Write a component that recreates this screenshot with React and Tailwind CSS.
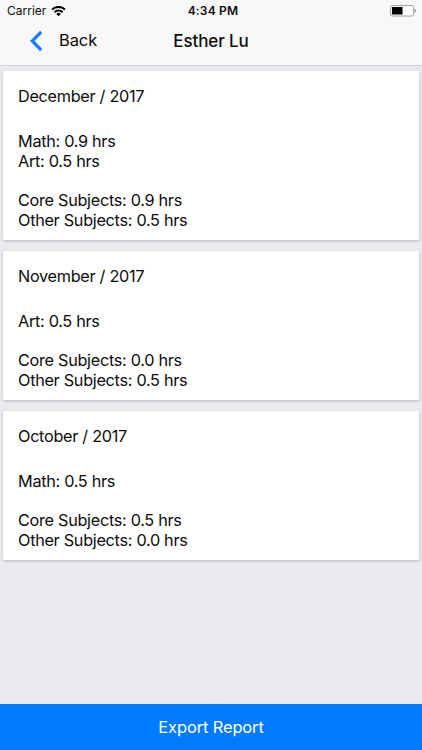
const months = [
  {
    title: "December / 2017",
    subjects: ["Math: 0.9 hrs", "Art: 0.5 hrs"],
    totals: ["Core Subjects: 0.9 hrs", "Other Subjects: 0.5 hrs"],
  },
  {
    title: "November / 2017",
    subjects: ["Art: 0.5 hrs"],
    totals: ["Core Subjects: 0.0 hrs", "Other Subjects: 0.5 hrs"],
  },
  {
    title: "October / 2017",
    subjects: ["Math: 0.5 hrs"],
    totals: ["Core Subjects: 0.5 hrs", "Other Subjects: 0.0 hrs"],
  },
];

function WifiIcon() {
  return (
    <svg width="15" height="11" viewBox="0 0 15 11" fill="none" stroke="#000" strokeWidth="2">
      <path d="M1 3.6a9.2 9.2 0 0 1 13 0" />
      <path d="M3.4 6.2a5.8 5.8 0 0 1 8.2 0" />
      <path d="M7.5 10.2 5.2 8a3.2 3.2 0 0 1 4.6 0z" fill="#000" stroke="none" />
    </svg>
  );
}

function BatteryIcon() {
  return (
    <svg width="27" height="12" viewBox="0 0 27 12" fill="none">
      <rect x="0.6" y="0.6" width="23" height="10.4" rx="1.6" fill="#fff" stroke="#9b9b9b" />
      <rect x="2" y="2" width="10.5" height="7.5" fill="#000" />
      <path d="M24.6 3.8v4c2-.4 2-3.6 0-4z" fill="#9b9b9b" />
    </svg>
  );
}

function StatusBar() {
  return (
    <div className="grid h-[22px] grid-cols-3 items-center pl-[7px] pr-[5px]">
      <div className="flex items-center gap-[5px]">
        <span className="text-[12px] leading-[22px]">Carrier</span>
        <WifiIcon />
      </div>
      <span className="pl-[2px] text-center text-[12px] font-semibold leading-[22px] tracking-[0.2px]">4:34 PM</span>
      <div className="flex justify-end">
        <BatteryIcon />
      </div>
    </div>
  );
}

function Header() {
  return (
    <header className="h-[66px] shrink-0 border-b border-[#d2d2d6] bg-[#f8f8f8]">
      <StatusBar />
      <div className="grid h-[38px] grid-cols-3 items-center">
        <button className="flex items-center gap-[16px] pl-[30px]">
          <svg width="13" height="22" viewBox="0 0 13 22" fill="none" stroke="#157efb" strokeWidth="3.2">
            <path d="M11.2 1.9 2.2 11l9 9.1" />
          </svg>
          <span className="pb-[2px] text-[16.5px] leading-5 tracking-[-0.1px]">Back</span>
        </button>
        <h1 className="text-center text-[17px] font-medium leading-5 tracking-[-0.1px]">Esther Lu</h1>
      </div>
    </header>
  );
}

function MonthCard({ month }) {
  return (
    <article className="rounded-[1px] bg-white px-[15px] pb-[9.75px] pt-[15.75px] text-[16.25px] leading-[19.65px] tracking-[-0.3px] shadow-[0_1px_3px_rgba(0,0,0,0.22)]">
      <h2 className="mb-[25.5px]">{month.title}</h2>
      {month.subjects.map((line) => (
        <p key={line}>{line}</p>
      ))}
      <div className="mt-[19.65px]">
        {month.totals.map((line) => (
          <p key={line}>{line}</p>
        ))}
      </div>
    </article>
  );
}

export default function App() {
  return (
    <div className="flex h-[750px] w-[422px] flex-col overflow-hidden bg-[#e9e9ef] font-['Inter',sans-serif] text-[#0c0c0c]">
      <Header />
      <main className="flex flex-1 flex-col gap-[11px] px-[3px] pt-[5px]">
        {months.map((month) => (
          <MonthCard key={month.title} month={month} />
        ))}
      </main>
      <button className="h-[46px] shrink-0 bg-[#007aff] text-[16.5px] tracking-[-0.15px] text-white">Export Report</button>
    </div>
  );
}
